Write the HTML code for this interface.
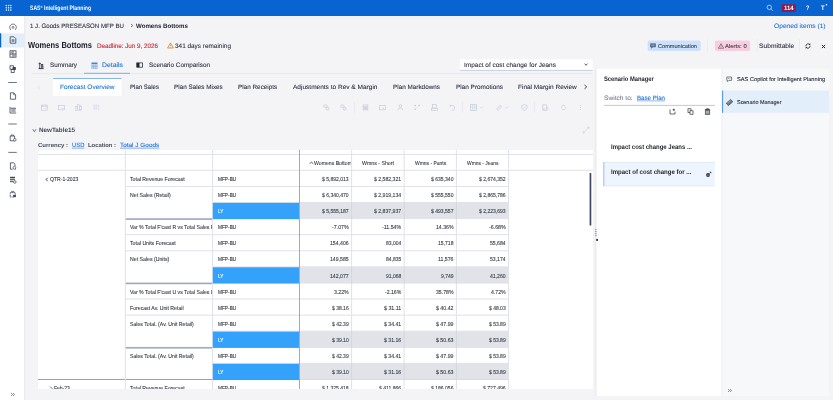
<!DOCTYPE html>
<html><head><meta charset="utf-8"><title>SAS Intelligent Planning</title>
<style>
html,body{margin:0;padding:0;}
body{width:833px;height:400px;overflow:hidden;background:#f4f4f7;font-family:"Liberation Sans",sans-serif;position:relative;}
#app{filter:brightness(1);position:absolute;left:0;top:0;width:833px;height:400px;overflow:hidden;background:#f4f4f7;}
#app div,#app svg,#app span.t{position:absolute;}
span.t{left:0;top:0;white-space:pre;transform-origin:0 0;display:block;}
span.b{will-change:transform;}
span.r{-webkit-text-stroke:0.08px;}
span.s{-webkit-text-stroke:0.1px;}
span.c{will-change:auto;text-rendering:geometricPrecision;}
span.g{text-rendering:geometricPrecision;}
.clip{overflow:hidden;}
</style></head><body><div id="app">
<svg style="left:0;top:0" width="833" height="400" viewBox="0 0 833 400">
<rect x="0.00" y="0.00" width="833.00" height="16.00" fill="#0764d1"/>
<rect x="781.80" y="4.30" width="14.00" height="7.60" fill="#8c1c48" rx="1"/>
<rect x="825.70" y="3.90" width="1.50" height="1.50" fill="#fff" rx="0.7"/>
<rect x="0.00" y="16.00" width="24.00" height="384.00" fill="#fff"/>
<rect x="24.00" y="16.00" width="1.40" height="384.00" fill="#ebecf0"/>
<rect x="0.00" y="33.30" width="24.00" height="14.20" fill="#e3eefb"/>
<rect x="0.00" y="33.30" width="1.20" height="14.20" fill="#0764d1"/>
<rect x="8.30" y="82.20" width="8.50" height="0.80" fill="#4a5060"/>
<rect x="8.30" y="123.60" width="8.50" height="0.80" fill="#4a5060"/>
<rect x="8.30" y="151.90" width="8.50" height="0.80" fill="#4a5060"/>
<rect x="647.70" y="40.50" width="53.00" height="10.40" fill="#cde1fb" rx="1.6"/>
<rect x="714.90" y="40.50" width="35.30" height="10.40" fill="#f6cfdf" rx="1.6"/>
<rect x="707.30" y="39.00" width="0.60" height="13.00" fill="#e6e8ed"/>
<rect x="756.80" y="39.00" width="0.60" height="13.00" fill="#e2e4ea"/>
<rect x="799.40" y="39.00" width="0.60" height="13.00" fill="#e2e4ea"/>
<rect x="31.50" y="73.20" width="561.00" height="0.60" fill="#e1e3e9"/>
<rect x="84.00" y="72.80" width="46.00" height="1.00" fill="#7aaeee"/>
<rect x="460.20" y="59.30" width="132.50" height="11.00" fill="#fff"/>
<rect x="460.20" y="69.90" width="132.50" height="0.80" fill="#bac6d8"/>
<rect x="53.00" y="78.00" width="68.50" height="18.00" fill="#fff"/>
<rect x="53.00" y="78.00" width="68.50" height="0.90" fill="#77aeee"/>
<rect x="354.20" y="101.80" width="0.60" height="11.40" fill="#e0e3ea"/>
<rect x="462.30" y="101.80" width="0.60" height="11.40" fill="#e0e3ea"/>
<rect x="534.20" y="101.80" width="0.60" height="11.40" fill="#e0e3ea"/>
<rect x="38.00" y="150.00" width="554.90" height="239.00" fill="#fff"/>
<rect x="38.00" y="153.90" width="554.90" height="1.00" fill="#dfe1ea"/>
<rect x="38.00" y="169.80" width="554.90" height="1.00" fill="#dfe1ea"/>
<rect x="125.30" y="185.89" width="383.30" height="1.00" fill="#dfe1ea"/>
<rect x="212.60" y="201.98" width="296.00" height="1.00" fill="#dfe1ea"/>
<rect x="125.30" y="218.07" width="383.30" height="1.00" fill="#dfe1ea"/>
<rect x="125.30" y="234.16" width="383.30" height="1.00" fill="#dfe1ea"/>
<rect x="125.30" y="250.25" width="383.30" height="1.00" fill="#dfe1ea"/>
<rect x="212.60" y="266.34" width="296.00" height="1.00" fill="#dfe1ea"/>
<rect x="125.30" y="282.43" width="383.30" height="1.00" fill="#dfe1ea"/>
<rect x="125.30" y="298.52" width="383.30" height="1.00" fill="#dfe1ea"/>
<rect x="125.30" y="314.61" width="383.30" height="1.00" fill="#dfe1ea"/>
<rect x="212.60" y="330.70" width="296.00" height="1.00" fill="#dfe1ea"/>
<rect x="125.30" y="346.79" width="383.30" height="1.00" fill="#dfe1ea"/>
<rect x="212.60" y="362.88" width="296.00" height="1.00" fill="#dfe1ea"/>
<rect x="38.00" y="378.97" width="470.60" height="1.00" fill="#8fa2b8"/>
<rect x="125.30" y="218.37" width="87.30" height="1.50" fill="#98a9bf"/>
<rect x="125.30" y="282.73" width="87.30" height="1.50" fill="#98a9bf"/>
<rect x="125.30" y="347.09" width="87.30" height="1.50" fill="#98a9bf"/>
<rect x="124.80" y="150.00" width="1.00" height="239.00" fill="#dfe1ea"/>
<rect x="212.10" y="150.00" width="1.00" height="239.00" fill="#dfe1ea"/>
<rect x="299.00" y="150.00" width="0.80" height="239.00" fill="#8f94a5"/>
<rect x="351.10" y="150.00" width="1.00" height="239.00" fill="#dfe1ea"/>
<rect x="403.60" y="150.00" width="1.00" height="239.00" fill="#dfe1ea"/>
<rect x="455.90" y="150.00" width="1.00" height="239.00" fill="#dfe1ea"/>
<rect x="508.10" y="150.00" width="1.00" height="239.00" fill="#dfe1ea"/>
<rect x="212.80" y="202.88" width="86.40" height="16.29" fill="#34a1fa"/>
<rect x="299.80" y="202.58" width="208.80" height="16.39" fill="#e1e3e8"/>
<rect x="351.10" y="202.58" width="1.00" height="16.39" fill="#d3d6de"/>
<rect x="403.60" y="202.58" width="1.00" height="16.39" fill="#d3d6de"/>
<rect x="455.90" y="202.58" width="1.00" height="16.39" fill="#d3d6de"/>
<rect x="212.80" y="267.24" width="86.40" height="16.29" fill="#34a1fa"/>
<rect x="299.80" y="266.94" width="208.80" height="16.39" fill="#e1e3e8"/>
<rect x="351.10" y="266.94" width="1.00" height="16.39" fill="#d3d6de"/>
<rect x="403.60" y="266.94" width="1.00" height="16.39" fill="#d3d6de"/>
<rect x="455.90" y="266.94" width="1.00" height="16.39" fill="#d3d6de"/>
<rect x="212.80" y="331.60" width="86.40" height="16.29" fill="#34a1fa"/>
<rect x="299.80" y="331.30" width="208.80" height="16.39" fill="#e1e3e8"/>
<rect x="351.10" y="331.30" width="1.00" height="16.39" fill="#d3d6de"/>
<rect x="403.60" y="331.30" width="1.00" height="16.39" fill="#d3d6de"/>
<rect x="455.90" y="331.30" width="1.00" height="16.39" fill="#d3d6de"/>
<rect x="212.80" y="363.78" width="86.40" height="16.29" fill="#34a1fa"/>
<rect x="299.80" y="363.48" width="208.80" height="16.39" fill="#e1e3e8"/>
<rect x="351.10" y="363.48" width="1.00" height="16.39" fill="#d3d6de"/>
<rect x="403.60" y="363.48" width="1.00" height="16.39" fill="#d3d6de"/>
<rect x="455.90" y="363.48" width="1.00" height="16.39" fill="#d3d6de"/>
<rect x="589.60" y="173.00" width="1.70" height="52.60" fill="#3d4864" rx="0.6"/>
<rect x="594.90" y="68.60" width="1.80" height="327.60" fill="#ebecf1"/>
<rect x="596.60" y="68.60" width="125.20" height="327.40" fill="#fff"/>
<rect x="722.00" y="68.60" width="107.00" height="327.40" fill="#f7f8fa"/>
<rect x="721.70" y="68.60" width="0.60" height="327.40" fill="#e6e8ec"/>
<rect x="595.00" y="229.20" width="1.70" height="0.90" fill="#8d929e"/>
<rect x="595.00" y="231.20" width="1.70" height="0.90" fill="#8d929e"/>
<rect x="595.00" y="233.20" width="1.70" height="0.90" fill="#8d929e"/>
<rect x="595.00" y="235.20" width="1.70" height="0.90" fill="#8d929e"/>
<rect x="596.20" y="238.90" width="1.80" height="2.00" fill="#2f3545"/>
<rect x="604.00" y="104.90" width="111.00" height="0.90" fill="#bfc2c9"/>
<rect x="603.50" y="162.20" width="111.40" height="24.00" fill="#eff5fe"/>
<rect x="603.50" y="162.20" width="111.40" height="0.60" fill="#d6e4f6"/>
<rect x="603.50" y="185.60" width="111.40" height="0.60" fill="#d6e4f6"/>
<rect x="603.40" y="162.20" width="0.90" height="24.00" fill="#8db6ee"/>
<rect x="722.00" y="90.60" width="107.00" height="22.20" fill="#e3eefb"/>
<rect x="722.10" y="90.60" width="1.00" height="22.20" fill="#4f8fe6"/>
<rect x="72.00" y="147.68" width="12.40" height="0.90" fill="#1a6fd6" fill-opacity="0.55"/>
<rect x="120.00" y="147.68" width="39.30" height="0.90" fill="#1a6fd6" fill-opacity="0.55"/>
<rect x="637.00" y="100.42" width="28.00" height="0.90" fill="#1a6fd6" fill-opacity="0.55"/>
</svg>
<svg style="left:0px;top:0px;" width="24" height="16" viewBox="0 0 24 16"><rect x="5.70" y="4.90" width="1.25" height="1.25" fill="#fff"/><rect x="5.70" y="7.15" width="1.25" height="1.25" fill="#fff"/><rect x="5.70" y="9.40" width="1.25" height="1.25" fill="#fff"/><rect x="7.95" y="4.90" width="1.25" height="1.25" fill="#fff"/><rect x="7.95" y="7.15" width="1.25" height="1.25" fill="#fff"/><rect x="7.95" y="9.40" width="1.25" height="1.25" fill="#fff"/><rect x="10.20" y="4.90" width="1.25" height="1.25" fill="#fff"/><rect x="10.20" y="7.15" width="1.25" height="1.25" fill="#fff"/><rect x="10.20" y="9.40" width="1.25" height="1.25" fill="#fff"/></svg>
<span class="t c" style="font-size:6.4px;line-height:8px;color:#fff;transform:translate(30.00px,5.00px) scaleX(0.7977);font-weight:700;">SAS<span style="font-size:3.6px;vertical-align:2.4px;line-height:0">®</span> Intelligent Planning</span>
<svg style="left:765px;top:3px;" width="10" height="10" viewBox="0 0 10 10"><circle cx="4.3" cy="4.3" r="2.2" fill="none" stroke="#e8f0fb" stroke-width="0.7"/><path d="M6 6 L7.6 7.6" stroke="#e8f0fb" stroke-width="0.7"/></svg>
<span class="t c" style="font-size:6.2px;line-height:8px;color:#fff;transform:translate(784.00px,5.00px) scaleX(0.9597);font-weight:700;">114</span>
<span class="t c" style="font-size:6.5px;line-height:9px;color:#fff;transform:translate(806.00px,4.00px) scaleX(0.8563);font-weight:700;">?</span>
<span class="t c" style="font-size:6.6px;line-height:9px;color:#fff;transform:translate(821.00px,4.00px) scaleX(0.8929);font-weight:700;">T</span>
<svg style="left:8.5px;top:22.6px;" width="8" height="8" viewBox="0 0 8 8"><circle cx="4" cy="4.4" r="1.0" fill="none" stroke="#3b4252" stroke-width="0.65"/><path d="M2 7 A3.3 3.3 0 1 1 6 7" fill="none" stroke="#3b4252" stroke-width="0.7"/></svg>
<svg style="left:8.5px;top:36.4px;" width="8" height="8" viewBox="0 0 8 8"><path d="M1.2 0.8 H5 L6.8 2.6 V7.2 H1.2 Z" fill="none" stroke="#3b4252" stroke-width="0.8"/><rect x="2.6" y="3.2" width="2.8" height="2.6" fill="#3b4252" opacity="0.6"/></svg>
<svg style="left:8.5px;top:50.4px;" width="8" height="8" viewBox="0 0 8 8"><rect x="1" y="0.8" width="6" height="6.4" fill="none" stroke="#3b4252" stroke-width="0.8"/><path d="M4 0.8 V7.2 M1 4 H7" stroke="#3b4252" stroke-width="0.8"/><rect x="1.8" y="1.6" width="1.6" height="1.6" fill="#3b4252" opacity=".5"/><rect x="4.8" y="4.8" width="1.6" height="1.6" fill="#3b4252" opacity=".5"/></svg>
<svg style="left:8.5px;top:64.5px;" width="8" height="8" viewBox="0 0 8 8"><rect x="1" y="0.8" width="3.4" height="3.4" fill="none" stroke="#3b4252" stroke-width="0.8"/><rect x="3.6" y="2" width="3.2" height="3" fill="#3b4252"/><rect x="2.2" y="4.6" width="3" height="2.8" fill="none" stroke="#3b4252" stroke-width="0.8"/></svg>
<svg style="left:8.5px;top:92.2px;" width="8" height="8" viewBox="0 0 8 8"><path d="M1.4 0.8 H4.8 L6.6 2.6 V7.2 H1.4 Z" fill="none" stroke="#3b4252" stroke-width="0.8"/><path d="M4.6 1 V2.8 H6.4" fill="none" stroke="#3b4252" stroke-width="0.6"/></svg>
<svg style="left:8.5px;top:106.2px;" width="8" height="8" viewBox="0 0 8 8"><path d="M1 0.8 V7 H7.2" fill="none" stroke="#3b4252" stroke-width="0.8"/><path d="M2.2 2.2 H6.6 V6 H2.2 Z" fill="#3b4252" opacity=".45"/><path d="M1.4 2.2 H7" stroke="#3b4252" stroke-width="0.7"/></svg>
<svg style="left:8.5px;top:134px;" width="8" height="8" viewBox="0 0 8 8"><path d="M1.2 2 H5.6 V6.8 H1.2 Z" fill="none" stroke="#3b4252" stroke-width="0.8"/><path d="M2.2 2 V1 H4.4 V2" fill="none" stroke="#3b4252" stroke-width="0.7"/><circle cx="5.8" cy="5.8" r="1.3" fill="#fff" stroke="#3b4252" stroke-width="0.7"/></svg>
<svg style="left:8.5px;top:161.5px;" width="8" height="8" viewBox="0 0 8 8"><path d="M1.4 0.8 H4.6 L6 2.2 V4 M3.6 7.2 H1.4 V0.8" fill="none" stroke="#3b4252" stroke-width="0.8"/><circle cx="5.4" cy="5.8" r="1.4" fill="none" stroke="#3b4252" stroke-width="0.7"/><path d="M6.2 6.8 L7 7.6" stroke="#3b4252" stroke-width="0.7"/></svg>
<svg style="left:8.5px;top:175.5px;" width="8" height="8" viewBox="0 0 8 8"><rect x="1" y="0.8" width="5" height="1.4" fill="#3b4252"/><rect x="1" y="2.8" width="5" height="1.4" fill="#3b4252" opacity=".8"/><rect x="1" y="4.8" width="3" height="1.4" fill="#3b4252" opacity=".8"/><circle cx="5.8" cy="6" r="1.3" fill="#fff" stroke="#3b4252" stroke-width="0.7"/></svg>
<svg style="left:8.5px;top:189.5px;" width="8" height="8" viewBox="0 0 8 8"><path d="M1.2 2.6 H6.2 V7 H1.2 Z" fill="none" stroke="#3b4252" stroke-width="0.8" stroke-dasharray="1.2 0.5"/><path d="M2.6 2.6 V1.4 H4.8 V2.6" fill="none" stroke="#3b4252" stroke-width="0.7"/><rect x="4.2" y="4.8" width="2.6" height="2.2" fill="#3b4252"/></svg>
<svg style="left:9.5px;top:392px;" width="6" height="5" viewBox="0 0 6 5"><path d="M1 1 L2.6 2.5 L1 4 M3 1 L4.6 2.5 L3 4" fill="none" stroke="#3b4252" stroke-width="0.6"/></svg>
<span class="t r c" style="font-size:6.3px;line-height:8px;color:#2a2f3a;transform:translate(30.00px,23.00px) scaleX(0.9704);">1 J. Goods PRESEASON MFP BU</span>
<svg style="left:129.5px;top:23.3px;" width="4" height="5" viewBox="0 0 4 5"><path d="M1 1 L2.8 2.5 L1 4" fill="none" stroke="#2a2f3a" stroke-width="0.6"/></svg>
<span class="t c" style="font-size:6.3px;line-height:8px;color:#1a1e28;transform:translate(136.00px,23.00px) scaleX(0.9731);font-weight:700;">Womens Bottoms</span>
<span class="t r c" style="font-size:6.3px;line-height:8px;color:#1a6fd6;transform:translate(774.00px,23.00px) scaleX(1.0601);">Opened items (1)</span>
<span class="t c" style="font-size:8.8px;line-height:11px;color:#1a1e28;transform:translate(28.00px,40.00px) scaleX(0.8574);font-weight:700;">Womens Bottoms</span>
<span class="t r c" style="font-size:6.5px;line-height:9px;color:#c4202b;transform:translate(97.00px,42.00px) scaleX(0.9645);">Deadline: Jun 9, 2026</span>
<svg style="left:167px;top:42px;" width="7" height="7" viewBox="0 0 7 7"><path d="M3.5 0.9 L6.4 6 H0.6 Z" fill="none" stroke="#c8721a" stroke-width="0.7"/><path d="M3.5 2.6 V4.4 M3.5 5 V5.5" stroke="#c8721a" stroke-width="0.6"/></svg>
<span class="t r c" style="font-size:6.5px;line-height:9px;color:#2a2f3a;transform:translate(175.00px,42.00px) scaleX(0.9871);">341 days remaining</span>
<svg style="left:650.4px;top:42.8px;" width="6" height="6" viewBox="0 0 6 6"><path d="M0.5 0.7 H5.5 V3.9 H2.8 L1.5 5.3 V3.9 H0.5 Z" fill="#5a6f90" stroke="#3c4f6e" stroke-width="0.5"/><path d="M1.3 1.8 H4.7 M1.3 2.8 H4.7" stroke="#cde1fb" stroke-width="0.35"/></svg>
<span class="t r c s" style="font-size:5.6px;line-height:7px;color:#34435a;transform:translate(658.00px,44.00px) scaleX(0.9998);">Communication</span>
<svg style="left:718.1px;top:42.8px;" width="6" height="6" viewBox="0 0 6 6"><path d="M3 0.7 L5.6 5.3 H0.4 Z" fill="none" stroke="#5d4052" stroke-width="0.6"/><path d="M3 2.3 V3.7 M3 4.2 V4.7" stroke="#5d4052" stroke-width="0.5"/></svg>
<span class="t r c s" style="font-size:5.6px;line-height:7px;color:#4d3a4a;transform:translate(725.00px,44.00px) scaleX(1.0564);">Alerts: 0</span>
<span class="t r c" style="font-size:6.4px;line-height:8px;color:#2a2f3a;transform:translate(759.00px,43.00px) scaleX(1.0444);">Submittable</span>
<svg style="left:804px;top:42px;" width="8" height="8" viewBox="0 0 8 8"><path d="M1.9 4.3 A2.2 2.2 0 0 1 5.6 2.4 M6.1 3.7 A2.2 2.2 0 0 1 2.4 5.6" fill="none" stroke="#1f2430" stroke-width="0.8"/><path d="M6.3 1.2 V3 H4.5 Z M1.7 6.8 V5 H3.5 Z" fill="#1f2430"/></svg>
<svg style="left:819.5px;top:42.5px;" width="7" height="7" viewBox="0 0 7 7"><path d="M1.9 1.9 L5.1 5.1 M5.1 1.9 L1.9 5.1" stroke="#1f2430" stroke-width="1.0"/></svg>
<svg style="left:38px;top:61.6px;" width="7" height="8" viewBox="0 0 7 8"><path d="M1.7 0.8 V6.6 M0.5 2.2 L1.7 0.8 L2.9 2.2" fill="none" stroke="#1f2430" stroke-width="0.75"/><rect x="2.9" y="2.2" width="2.3" height="1.5" fill="#1f2430"/><rect x="2.9" y="4.3" width="2.6" height="1.3" fill="#1f2430"/><rect x="0.6" y="6.2" width="5" height="0.9" fill="#1f2430"/></svg>
<span class="t r c" style="font-size:6.4px;line-height:8px;color:#2a2f3a;transform:translate(50.00px,62.00px) scaleX(0.9860);">Summary</span>
<svg style="left:90.8px;top:61.5px;" width="7" height="8" viewBox="0 0 7 8"><rect x="0.5" y="0.5" width="6" height="1.5" fill="#3f87e4"/><path d="M0.5 3.1 H6.5 M0.5 4.6 H6.5 M0.5 6.1 H6.5" stroke="#4f8fe6" stroke-width="0.6"/><path d="M0.8 2 V7 M2.5 2 V7 M4.5 2 V7 M6.2 2 V7" stroke="#7fb0ef" stroke-width="0.5"/></svg>
<span class="t r c" style="font-size:6.4px;line-height:8px;color:#1a6fd6;transform:translate(102.00px,62.00px) scaleX(1.0735);">Details</span>
<svg style="left:136.2px;top:62px;" width="7" height="7" viewBox="0 0 7 7"><rect x="0.8" y="0.9" width="5.6" height="4.3" fill="none" stroke="#1f2430" stroke-width="0.75"/><rect x="0.8" y="0.9" width="2.7" height="4.3" fill="#1f2430"/></svg>
<span class="t r c" style="font-size:6.4px;line-height:8px;color:#2a2f3a;transform:translate(149.00px,62.00px) scaleX(0.9928);">Scenario Comparison</span>
<span class="t r c" style="font-size:6.3px;line-height:8px;color:#2a2f3a;transform:translate(464.00px,62.00px) scaleX(1.0302);">Impact of cost change for Jeans</span>
<svg style="left:583.4px;top:62px;" width="6" height="5" viewBox="0 0 6 5"><path d="M1.6 1.6 L3 3.3 L4.4 1.6" fill="none" stroke="#2a2f3a" stroke-width="0.75"/></svg>
<svg style="left:36.5px;top:84.5px;" width="4" height="5" viewBox="0 0 4 5"><path d="M2.8 0.8 L1.2 2.5 L2.8 4.2" fill="none" stroke="#cfd3da" stroke-width="0.6"/></svg>
<span class="t r c" style="font-size:6.3px;line-height:8px;color:#1a6fd6;transform:translate(60.00px,84.00px) scaleX(1.0397);">Forecast Overview</span>
<span class="t r c" style="font-size:6.3px;line-height:8px;color:#2a2f3a;transform:translate(130.00px,84.00px) scaleX(0.9628);">Plan Sales</span>
<span class="t r c" style="font-size:6.3px;line-height:8px;color:#2a2f3a;transform:translate(174.00px,84.00px) scaleX(1.0099);">Plan Sales Mixes</span>
<span class="t r c" style="font-size:6.3px;line-height:8px;color:#2a2f3a;transform:translate(238.00px,84.00px) scaleX(1.0110);">Plan Receipts</span>
<span class="t r c" style="font-size:6.3px;line-height:8px;color:#2a2f3a;transform:translate(293.00px,84.00px) scaleX(1.0357);">Adjustments to Rev &amp; Margin</span>
<span class="t r c" style="font-size:6.3px;line-height:8px;color:#2a2f3a;transform:translate(393.00px,84.00px) scaleX(1.0092);">Plan Markdowns</span>
<span class="t r c" style="font-size:6.3px;line-height:8px;color:#2a2f3a;transform:translate(456.00px,84.00px) scaleX(1.0189);">Plan Promotions</span>
<span class="t r c" style="font-size:6.3px;line-height:8px;color:#2a2f3a;transform:translate(518.00px,84.00px) scaleX(1.0303);">Final Margin Review</span>
<svg style="left:583.2px;top:84.2px;" width="6" height="6" viewBox="0 0 6 6"><path d="M1.5 1 L3.7 2.9 L1.5 4.8" fill="none" stroke="#2a2f3a" stroke-width="0.85"/></svg>
<svg style="left:40.6px;top:104.2px;" width="7" height="7" viewBox="0 0 7 7"><rect x="0.6" y="1.2" width="5.6" height="5" fill="none" stroke="#c6ccd8" stroke-width="0.7"/><path d="M0.6 2.6 H6.2 M2 0.4 V1.6 M4.8 0.4 V1.6 M3.6 4.6 H5.2" stroke="#c6ccd8" stroke-width="0.6"/></svg>
<svg style="left:58px;top:104.2px;" width="7" height="7" viewBox="0 0 7 7"><rect x="0.6" y="1.4" width="5.8" height="4.4" fill="none" stroke="#c6ccd8" stroke-width="0.7"/><path d="M3.6 3.4 L5.4 4.4 L4.4 5.4 Z" fill="#c6ccd8"/></svg>
<svg style="left:75.3px;top:104.2px;" width="7" height="7" viewBox="0 0 7 7"><rect x="0.6" y="2.6" width="1.6" height="3.6" fill="none" stroke="#c6ccd8" stroke-width="0.6"/><rect x="2.6" y="0.8" width="1.8" height="5.4" fill="none" stroke="#c6ccd8" stroke-width="0.6"/><rect x="4.8" y="1.8" width="1.6" height="4.4" fill="none" stroke="#c6ccd8" stroke-width="0.6"/></svg>
<svg style="left:92.8px;top:104.2px;" width="7" height="7" viewBox="0 0 7 7"><path d="M0.4 1.2 H6.2 M0.4 3 H6.2 M0.4 4.8 H4.6" stroke="#c6ccd8" stroke-width="0.7" stroke-dasharray="1.6 0.5"/><path d="M5.4 4.6 L6.4 5.8 L5.4 6.6" fill="#c6ccd8"/></svg>
<svg style="left:323px;top:104.2px;" width="7" height="7" viewBox="0 0 7 7"><rect x="0.6" y="1" width="3.6" height="2.4" rx="1" fill="none" stroke="#c6ccd8" stroke-width="0.7"/><circle cx="4.6" cy="4.6" r="1.5" fill="#eef0f4" stroke="#c6ccd8" stroke-width="0.7"/></svg>
<svg style="left:340.3px;top:104.2px;" width="7" height="7" viewBox="0 0 7 7"><rect x="0.6" y="1" width="3.6" height="2.4" rx="1" fill="none" stroke="#c6ccd8" stroke-width="0.7"/><circle cx="4.6" cy="4.6" r="1.5" fill="#eef0f4" stroke="#c6ccd8" stroke-width="0.7"/></svg>
<svg style="left:361.6px;top:104.2px;" width="7" height="7" viewBox="0 0 7 7"><rect x="0.6" y="0.4" width="5.6" height="6" fill="#c6ccd8" opacity=".75"/><rect x="1.6" y="0.4" width="3.4" height="1.8" fill="#e6e9ef"/></svg>
<svg style="left:379px;top:104.2px;" width="7" height="7" viewBox="0 0 7 7"><rect x="0.6" y="1.4" width="5.8" height="4.4" fill="none" stroke="#c6ccd8" stroke-width="0.7"/><path d="M3.6 3.4 L5.4 4.4 L4.4 5.4 Z" fill="#c6ccd8"/></svg>
<svg style="left:396.6px;top:104.2px;" width="7" height="7" viewBox="0 0 7 7"><circle cx="3.4" cy="2" r="1.4" fill="none" stroke="#c6ccd8" stroke-width="0.7"/><path d="M1 6.4 Q1 4 3.4 4 Q5.8 4 5.8 6.4" fill="none" stroke="#c6ccd8" stroke-width="0.7"/></svg>
<svg style="left:413.6px;top:104.2px;" width="7" height="7" viewBox="0 0 7 7"><rect x="0.4" y="0.8" width="1.6" height="1.3" fill="#c6ccd8"/><rect x="4.4" y="0.8" width="1.6" height="1.3" fill="#c6ccd8"/><rect x="0.4" y="4.6" width="1.6" height="1.3" fill="#c6ccd8"/><path d="M2.4 4.4 L4.2 2.6" stroke="#c6ccd8" stroke-width="0.4"/></svg>
<svg style="left:431.2px;top:104.2px;" width="7" height="7" viewBox="0 0 7 7"><rect x="1.6" y="0.6" width="3.6" height="3.4" fill="none" stroke="#c6ccd8" stroke-width="0.7"/><rect x="0.6" y="4.6" width="5.8" height="1.8" fill="none" stroke="#c6ccd8" stroke-width="0.7"/></svg>
<svg style="left:449px;top:104.2px;" width="7" height="7" viewBox="0 0 7 7"><path d="M1.4 2 A2.5 2.5 0 1 1 2.6 6.2" fill="none" stroke="#c6ccd8" stroke-width="0.7"/><path d="M0.4 1 L2.4 1.4 L1 3 Z" fill="#c6ccd8"/></svg>
<svg style="left:470px;top:104.2px;" width="14" height="7" viewBox="0 0 14 7"><rect x="0.6" y="0.6" width="6" height="5.8" fill="none" stroke="#c6ccd8" stroke-width="0.7"/><path d="M2.6 0.6 V6.4 M4.6 0.6 V6.4 M0.6 3 H6.6" stroke="#c6ccd8" stroke-width="0.5"/><path d="M9.8 2.6 L11.5 4.2 L13.2 2.6" fill="none" stroke="#c6ccd8" stroke-width="0.6"/></svg>
<svg style="left:496px;top:104.2px;" width="13" height="7" viewBox="0 0 13 7"><path d="M0.6 5 L4.2 1.2 L5.8 2.6 L2.2 6.4 Z" fill="none" stroke="#c6ccd8" stroke-width="0.7"/><path d="M1.8 4.6 L4.6 1.8" stroke="#c6ccd8" stroke-width="0.4"/><path d="M9 2.6 L10.7 4.2 L12.4 2.6" fill="none" stroke="#c6ccd8" stroke-width="0.6"/></svg>
<svg style="left:520.5px;top:104.2px;" width="7" height="7" viewBox="0 0 7 7"><path d="M3.4 0.6 L6 1.6 V3.6 Q6 5.4 3.4 6.6 Q0.8 5.4 0.8 3.6 V1.6 Z" fill="none" stroke="#c6ccd8" stroke-width="0.7"/><path d="M2.2 3.4 L3.2 4.4 L4.8 2.6" fill="none" stroke="#c6ccd8" stroke-width="0.6"/></svg>
<svg style="left:542.3px;top:104.2px;" width="7" height="7" viewBox="0 0 7 7"><path d="M0.8 0.8 H4.6 V6.4 H0.8 Z" fill="none" stroke="#c6ccd8" stroke-width="0.7"/><circle cx="2.2" cy="5" r="0.9" fill="none" stroke="#c6ccd8" stroke-width="0.5"/><path d="M5.6 2.6 V6.4" stroke="#c6ccd8" stroke-width="0.6"/></svg>
<svg style="left:559.6px;top:104.2px;" width="7" height="7" viewBox="0 0 7 7"><path d="M1.2 3.8 A2.3 2.3 0 0 1 5.2 2.2 M5.8 3.2 A2.3 2.3 0 0 1 1.8 4.9" fill="none" stroke="#c6ccd8" stroke-width="0.7"/></svg>
<svg style="left:578.8px;top:104.2px;" width="3" height="7" viewBox="0 0 3 7"><circle cx="1.5" cy="1.2" r="0.5" fill="#c6ccd8"/><circle cx="1.5" cy="3.3" r="0.5" fill="#c6ccd8"/><circle cx="1.5" cy="5.4" r="0.5" fill="#c6ccd8"/></svg>
<svg style="left:32px;top:127.8px;" width="5" height="5" viewBox="0 0 5 5"><path d="M0.7 1.2 L2.4 3.6 L4.1 1.2" fill="none" stroke="#3a3f4a" stroke-width="0.7"/></svg>
<span class="t c" style="font-size:6.3px;line-height:8px;color:#434854;transform:translate(39.00px,127.00px) scaleX(1.0014);font-weight:700;">NewTable15</span>
<span class="t c" style="font-size:5.8px;line-height:8px;color:#474c58;transform:translate(38.00px,142.00px) scaleX(1.0342);font-weight:700;">Currency :</span>
<span class="t r c" style="font-size:6.2px;line-height:8px;color:#1a6fd6;transform:translate(72.00px,142.00px) scaleX(0.9472);">USD</span>
<span class="t c" style="font-size:5.8px;line-height:8px;color:#474c58;transform:translate(88.00px,142.00px) scaleX(1.0105);font-weight:700;">Location :</span>
<span class="t r c" style="font-size:6.2px;line-height:8px;color:#1a6fd6;transform:translate(120.00px,142.00px) scaleX(1.0367);">Total J Goods</span>
<svg style="left:582px;top:126px;" width="8" height="8" viewBox="0 0 8 8"><path d="M1.4 6.8 L6.8 1.4 M5 1.2 H7 V3.2 M1.2 5 V7 H3.2" fill="none" stroke="#c6ccd8" stroke-width="0.6"/></svg>
<div class="clip" style="left:300.00px;top:155.00px;width:51.30px;height:15.00px;">
<svg style="left:8.600000000000023px;top:5.599999999999994px;" width="5" height="4" viewBox="0 0 5 4"><path d="M0.6 3.2 L2.4 0.8 L4.2 3.2" fill="none" stroke="#2a2f3a" stroke-width="0.6"/></svg>
<span class="t r c s" style="font-size:5.7px;line-height:8px;color:#353a46;transform:translate(14.00px,5.00px) scaleX(0.9047);">Womens Bottoms</span>
</div>
<span class="t r c s" style="font-size:5.7px;line-height:8px;color:#353a46;transform:translate(362.00px,160.00px) scaleX(0.9185);">Wmns - Short</span>
<span class="t r c s" style="font-size:5.7px;line-height:8px;color:#353a46;transform:translate(415.00px,160.00px) scaleX(0.8746);">Wmns - Pants</span>
<span class="t r c s" style="font-size:5.7px;line-height:8px;color:#353a46;transform:translate(467.00px,160.00px) scaleX(0.8648);">Wmns - Jeans</span>
<svg style="left:45px;top:176.6px;" width="4" height="5" viewBox="0 0 4 5"><path d="M2.7 0.8 L1.1 2.5 L2.7 4.2" fill="none" stroke="#2a2f3a" stroke-width="0.9"/></svg>
<span class="t r c s" style="font-size:5.7px;line-height:8px;color:#353a46;transform:translate(50.00px,176.00px) scaleX(0.8968);">QTR-1-2023</span>
<div class="clip" style="left:126.00px;top:171.00px;width:86.30px;height:15.00px;">
<span class="t r c s" style="font-size:5.7px;line-height:8px;color:#353a46;transform:translate(4.00px,5.00px) scaleX(0.9100);">Total Revenue Forecast</span>
</div>
<span class="t r c s" style="font-size:5.7px;line-height:8px;color:#353a46;transform:translate(218.00px,176.00px) scaleX(0.8371);">MFP-BU</span>
<span class="t r c s" style="font-size:5.7px;line-height:8px;color:#353a46;transform:translate(322.00px,176.00px) scaleX(0.8867);">$ 5,892,013</span>
<span class="t r c s" style="font-size:5.7px;line-height:8px;color:#353a46;transform:translate(374.00px,176.00px) scaleX(0.9033);">$ 2,582,321</span>
<span class="t r c s" style="font-size:5.7px;line-height:8px;color:#353a46;transform:translate(431.00px,176.00px) scaleX(0.8873);">$ 635,340</span>
<span class="t r c s" style="font-size:5.7px;line-height:8px;color:#353a46;transform:translate(479.00px,176.00px) scaleX(0.8867);">$ 2,674,352</span>
<div class="clip" style="left:126.00px;top:187.00px;width:86.30px;height:15.00px;">
<span class="t r c s" style="font-size:5.7px;line-height:8px;color:#353a46;transform:translate(4.00px,5.00px) scaleX(0.9117);">Net Sales (Retail)</span>
</div>
<span class="t r c s" style="font-size:5.7px;line-height:8px;color:#353a46;transform:translate(218.00px,192.00px) scaleX(0.8371);">MFP-BU</span>
<span class="t r c s" style="font-size:5.7px;line-height:8px;color:#353a46;transform:translate(322.00px,192.00px) scaleX(0.8867);">$ 6,340,470</span>
<span class="t r c s" style="font-size:5.7px;line-height:8px;color:#353a46;transform:translate(374.00px,192.00px) scaleX(0.9033);">$ 2,919,134</span>
<span class="t r c s" style="font-size:5.7px;line-height:8px;color:#353a46;transform:translate(431.00px,192.00px) scaleX(0.8873);">$ 555,550</span>
<span class="t r c s" style="font-size:5.7px;line-height:8px;color:#353a46;transform:translate(479.00px,192.00px) scaleX(0.8867);">$ 2,865,786</span>
<span class="t r c s" style="font-size:5.7px;line-height:8px;color:#fff;transform:translate(218.00px,208.00px) scaleX(0.8142);">LY</span>
<span class="t r c s" style="font-size:5.7px;line-height:8px;color:#353a46;transform:translate(322.00px,208.00px) scaleX(0.8867);">$ 5,555,187</span>
<span class="t r c s" style="font-size:5.7px;line-height:8px;color:#353a46;transform:translate(374.00px,208.00px) scaleX(0.9033);">$ 2,837,937</span>
<span class="t r c s" style="font-size:5.7px;line-height:8px;color:#353a46;transform:translate(431.00px,208.00px) scaleX(0.8873);">$ 493,557</span>
<span class="t r c s" style="font-size:5.7px;line-height:8px;color:#353a46;transform:translate(479.00px,208.00px) scaleX(0.8867);">$ 2,223,693</span>
<div class="clip" style="left:126.00px;top:219.00px;width:86.30px;height:15.00px;">
<span class="t r c s" style="font-size:5.7px;line-height:8px;color:#353a46;transform:translate(4.00px,5.00px) scaleX(0.9082);">Var % Total F'cast R vs Total Sales R</span>
</div>
<span class="t r c s" style="font-size:5.7px;line-height:8px;color:#353a46;transform:translate(218.00px,224.00px) scaleX(0.8371);">MFP-BU</span>
<span class="t r c s" style="font-size:5.7px;line-height:8px;color:#353a46;transform:translate(332.00px,224.00px) scaleX(0.9247);">-7.07%</span>
<span class="t r c s" style="font-size:5.7px;line-height:8px;color:#353a46;transform:translate(382.00px,224.00px) scaleX(0.9227);">-11.54%</span>
<span class="t r c s" style="font-size:5.7px;line-height:8px;color:#353a46;transform:translate(436.00px,224.00px) scaleX(0.9052);">14.36%</span>
<span class="t r c s" style="font-size:5.7px;line-height:8px;color:#353a46;transform:translate(489.00px,224.00px) scaleX(0.9247);">-6.68%</span>
<div class="clip" style="left:126.00px;top:235.00px;width:86.30px;height:15.00px;">
<span class="t r c s" style="font-size:5.7px;line-height:8px;color:#353a46;transform:translate(4.00px,5.00px) scaleX(0.9110);">Total Units Forecast</span>
</div>
<span class="t r c s" style="font-size:5.7px;line-height:8px;color:#353a46;transform:translate(218.00px,240.00px) scaleX(0.8371);">MFP-BU</span>
<span class="t r c s" style="font-size:5.7px;line-height:8px;color:#353a46;transform:translate(330.00px,240.00px) scaleX(0.9076);">154,406</span>
<span class="t r c s" style="font-size:5.7px;line-height:8px;color:#353a46;transform:translate(386.00px,240.00px) scaleX(0.8718);">83,004</span>
<span class="t r c s" style="font-size:5.7px;line-height:8px;color:#353a46;transform:translate(438.00px,240.00px) scaleX(0.8890);">15,718</span>
<span class="t r c s" style="font-size:5.7px;line-height:8px;color:#353a46;transform:translate(490.00px,240.00px) scaleX(0.9005);">55,684</span>
<div class="clip" style="left:126.00px;top:251.00px;width:86.30px;height:15.00px;">
<span class="t r c s" style="font-size:5.7px;line-height:8px;color:#353a46;transform:translate(4.00px,5.00px) scaleX(0.9120);">Net Sales (Units)</span>
</div>
<span class="t r c s" style="font-size:5.7px;line-height:8px;color:#353a46;transform:translate(218.00px,256.00px) scaleX(0.8371);">MFP-BU</span>
<span class="t r c s" style="font-size:5.7px;line-height:8px;color:#353a46;transform:translate(330.00px,256.00px) scaleX(0.9076);">149,585</span>
<span class="t r c s" style="font-size:5.7px;line-height:8px;color:#353a46;transform:translate(386.00px,256.00px) scaleX(0.8718);">84,835</span>
<span class="t r c s" style="font-size:5.7px;line-height:8px;color:#353a46;transform:translate(438.00px,256.00px) scaleX(0.9112);">11,576</span>
<span class="t r c s" style="font-size:5.7px;line-height:8px;color:#353a46;transform:translate(490.00px,256.00px) scaleX(0.9005);">53,174</span>
<span class="t r c s" style="font-size:5.7px;line-height:8px;color:#fff;transform:translate(218.00px,273.00px) scaleX(0.8142);">LY</span>
<span class="t r c s" style="font-size:5.7px;line-height:8px;color:#353a46;transform:translate(330.00px,273.00px) scaleX(0.9076);">142,077</span>
<span class="t r c s" style="font-size:5.7px;line-height:8px;color:#353a46;transform:translate(386.00px,273.00px) scaleX(0.8718);">91,068</span>
<span class="t r c s" style="font-size:5.7px;line-height:8px;color:#353a46;transform:translate(441.00px,273.00px) scaleX(0.8763);">9,749</span>
<span class="t r c s" style="font-size:5.7px;line-height:8px;color:#353a46;transform:translate(490.00px,273.00px) scaleX(0.9005);">41,260</span>
<div class="clip" style="left:126.00px;top:284.00px;width:86.30px;height:15.00px;">
<span class="t r c s" style="font-size:5.7px;line-height:8px;color:#353a46;transform:translate(4.00px,5.00px) scaleX(0.9082);">Var % Total F'cast U vs Total Sales U</span>
</div>
<span class="t r c s" style="font-size:5.7px;line-height:8px;color:#353a46;transform:translate(218.00px,289.00px) scaleX(0.8371);">MFP-BU</span>
<span class="t r c s" style="font-size:5.7px;line-height:8px;color:#353a46;transform:translate(334.00px,289.00px) scaleX(0.9095);">3.22%</span>
<span class="t r c s" style="font-size:5.7px;line-height:8px;color:#353a46;transform:translate(385.00px,289.00px) scaleX(0.8970);">-2.16%</span>
<span class="t r c s" style="font-size:5.7px;line-height:8px;color:#353a46;transform:translate(436.00px,289.00px) scaleX(0.9052);">35.78%</span>
<span class="t r c s" style="font-size:5.7px;line-height:8px;color:#353a46;transform:translate(491.00px,289.00px) scaleX(0.9095);">4.72%</span>
<div class="clip" style="left:126.00px;top:300.00px;width:86.30px;height:15.00px;">
<span class="t r c s" style="font-size:5.7px;line-height:8px;color:#353a46;transform:translate(4.00px,5.00px) scaleX(0.9101);">Forecast Av. Unit Retail</span>
</div>
<span class="t r c s" style="font-size:5.7px;line-height:8px;color:#353a46;transform:translate(218.00px,305.00px) scaleX(0.8371);">MFP-BU</span>
<span class="t r c s" style="font-size:5.7px;line-height:8px;color:#353a46;transform:translate(332.00px,305.00px) scaleX(0.8781);">$ 38.16</span>
<span class="t r c s" style="font-size:5.7px;line-height:8px;color:#353a46;transform:translate(384.00px,305.00px) scaleX(0.9250);">$ 31.11</span>
<span class="t r c s" style="font-size:5.7px;line-height:8px;color:#353a46;transform:translate(436.00px,305.00px) scaleX(0.9202);">$ 40.42</span>
<span class="t r c s" style="font-size:5.7px;line-height:8px;color:#353a46;transform:translate(489.00px,305.00px) scaleX(0.8781);">$ 48.03</span>
<div class="clip" style="left:126.00px;top:316.00px;width:86.30px;height:15.00px;">
<span class="t r c s" style="font-size:5.7px;line-height:8px;color:#353a46;transform:translate(4.00px,5.00px) scaleX(0.9093);">Sales Total. (Av. Unit Retail)</span>
</div>
<span class="t r c s" style="font-size:5.7px;line-height:8px;color:#353a46;transform:translate(218.00px,321.00px) scaleX(0.8371);">MFP-BU</span>
<span class="t r c s" style="font-size:5.7px;line-height:8px;color:#353a46;transform:translate(332.00px,321.00px) scaleX(0.8781);">$ 42.39</span>
<span class="t r c s" style="font-size:5.7px;line-height:8px;color:#353a46;transform:translate(384.00px,321.00px) scaleX(0.9044);">$ 34.41</span>
<span class="t r c s" style="font-size:5.7px;line-height:8px;color:#353a46;transform:translate(436.00px,321.00px) scaleX(0.9202);">$ 47.99</span>
<span class="t r c s" style="font-size:5.7px;line-height:8px;color:#353a46;transform:translate(489.00px,321.00px) scaleX(0.8781);">$ 53.89</span>
<span class="t r c s" style="font-size:5.7px;line-height:8px;color:#fff;transform:translate(218.00px,337.00px) scaleX(0.8142);">LY</span>
<span class="t r c s" style="font-size:5.7px;line-height:8px;color:#353a46;transform:translate(332.00px,337.00px) scaleX(0.8781);">$ 39.10</span>
<span class="t r c s" style="font-size:5.7px;line-height:8px;color:#353a46;transform:translate(384.00px,337.00px) scaleX(0.9044);">$ 31.16</span>
<span class="t r c s" style="font-size:5.7px;line-height:8px;color:#353a46;transform:translate(436.00px,337.00px) scaleX(0.9202);">$ 50.63</span>
<span class="t r c s" style="font-size:5.7px;line-height:8px;color:#353a46;transform:translate(489.00px,337.00px) scaleX(0.8781);">$ 53.89</span>
<div class="clip" style="left:126.00px;top:348.00px;width:86.30px;height:15.00px;">
<span class="t r c s" style="font-size:5.7px;line-height:8px;color:#353a46;transform:translate(4.00px,5.00px) scaleX(0.9093);">Sales Total. (Av. Unit Retail)</span>
</div>
<span class="t r c s" style="font-size:5.7px;line-height:8px;color:#353a46;transform:translate(218.00px,353.00px) scaleX(0.8371);">MFP-BU</span>
<span class="t r c s" style="font-size:5.7px;line-height:8px;color:#353a46;transform:translate(332.00px,353.00px) scaleX(0.8781);">$ 42.39</span>
<span class="t r c s" style="font-size:5.7px;line-height:8px;color:#353a46;transform:translate(384.00px,353.00px) scaleX(0.9044);">$ 34.41</span>
<span class="t r c s" style="font-size:5.7px;line-height:8px;color:#353a46;transform:translate(436.00px,353.00px) scaleX(0.9202);">$ 47.99</span>
<span class="t r c s" style="font-size:5.7px;line-height:8px;color:#353a46;transform:translate(489.00px,353.00px) scaleX(0.8781);">$ 53.89</span>
<span class="t r c s" style="font-size:5.7px;line-height:8px;color:#fff;transform:translate(218.00px,369.00px) scaleX(0.8142);">LY</span>
<span class="t r c s" style="font-size:5.7px;line-height:8px;color:#353a46;transform:translate(332.00px,369.00px) scaleX(0.8781);">$ 39.10</span>
<span class="t r c s" style="font-size:5.7px;line-height:8px;color:#353a46;transform:translate(384.00px,369.00px) scaleX(0.9044);">$ 31.16</span>
<span class="t r c s" style="font-size:5.7px;line-height:8px;color:#353a46;transform:translate(436.00px,369.00px) scaleX(0.9202);">$ 50.63</span>
<span class="t r c s" style="font-size:5.7px;line-height:8px;color:#353a46;transform:translate(489.00px,369.00px) scaleX(0.8781);">$ 53.89</span>
<div class="clip" style="left:38.00px;top:380.00px;width:470.60px;height:9.00px;">
<svg style="left:11.200000000000003px;top:5.715000000000032px;" width="4" height="5" viewBox="0 0 4 5"><path d="M1.2 0.6 L3 2.5 L1.2 4.4" fill="none" stroke="#2a2f3a" stroke-width="0.7"/></svg>
<span class="t r c s" style="font-size:5.7px;line-height:8px;color:#353a46;transform:translate(16.00px,5.00px) scaleX(0.8766);">Feb-23</span>
<span class="t r c s" style="font-size:5.7px;line-height:8px;color:#353a46;transform:translate(92.00px,5.00px) scaleX(0.9100);">Total Revenue Forecast</span>
<span class="t r c s" style="font-size:5.7px;line-height:8px;color:#353a46;transform:translate(180.00px,5.00px) scaleX(0.8371);">MFP-BU</span>
<span class="t r c s" style="font-size:5.7px;line-height:8px;color:#353a46;transform:translate(284.00px,5.00px) scaleX(0.8867);">$ 1,325,418</span>
<span class="t r c s" style="font-size:5.7px;line-height:8px;color:#353a46;transform:translate(341.00px,5.00px) scaleX(0.8903);">$ 411,866</span>
<span class="t r c s" style="font-size:5.7px;line-height:8px;color:#353a46;transform:translate(393.00px,5.00px) scaleX(0.8873);">$ 186,056</span>
<span class="t r c s" style="font-size:5.7px;line-height:8px;color:#353a46;transform:translate(445.00px,5.00px) scaleX(0.8952);">$ 727,496</span>
</div>
<span class="t c" style="font-size:6.5px;line-height:9px;color:#1a1e28;transform:translate(604.00px,75.00px) scaleX(0.8876);font-weight:700;">Scenario Manager</span>
<span class="t r c" style="font-size:6.3px;line-height:8px;color:#7a8090;transform:translate(604.00px,95.00px) scaleX(1.0509);">Switch to:</span>
<span class="t r c" style="font-size:6.3px;line-height:8px;color:#1a6fd6;transform:translate(637.00px,95.00px) scaleX(0.9749);">Base Plan</span>
<svg style="left:669.4px;top:108.3px;" width="7" height="7" viewBox="0 0 7 7"><path d="M1 1.4 V6 H6 V3.6" fill="none" stroke="#2a2f3a" stroke-width="0.7"/><path d="M4.8 0.6 V3 M3.6 1.8 H6" stroke="#2a2f3a" stroke-width="0.7"/></svg>
<svg style="left:687.3px;top:108.4px;" width="7" height="7" viewBox="0 0 7 7"><rect x="1" y="0.8" width="3" height="3.6" fill="none" stroke="#2a2f3a" stroke-width="0.7"/><rect x="3" y="2.8" width="3" height="3.4" fill="#fff" stroke="#2a2f3a" stroke-width="0.7"/></svg>
<svg style="left:704.4px;top:108.3px;" width="7" height="7" viewBox="0 0 7 7"><path d="M1.4 1.8 H5.6 V6.6 H1.4 Z" fill="#8a8f9a" stroke="#2a2f3a" stroke-width="0.6"/><path d="M0.9 1.7 H6.1 M2.5 1.7 V0.7 H4.5 V1.7" stroke="#2a2f3a" stroke-width="0.7" fill="none"/><path d="M2.8 3 V5.4 M4.2 3 V5.4" stroke="#fff" stroke-width="0.4"/></svg>
<span class="t c" style="font-size:6.7px;line-height:9px;color:#1a1e28;transform:translate(611.00px,143.00px) scaleX(0.8915);font-weight:700;">Impact cost change Jeans ...</span>
<span class="t c" style="font-size:6.7px;line-height:9px;color:#1a1e28;transform:translate(611.00px,168.00px) scaleX(0.9047);font-weight:700;">Impact of cost change for ...</span>
<svg style="left:704.5px;top:171px;" width="7" height="7" viewBox="0 0 7 7"><circle cx="3" cy="4" r="1.9" fill="#2a2f3a"/><path d="M4.4 2.6 L6 1 M4.6 1 H6 V2.4" stroke="#2a2f3a" stroke-width="0.6" fill="none"/><circle cx="3" cy="4" r="0.6" fill="#fff"/></svg>
<svg style="left:726px;top:76px;" width="7" height="7" viewBox="0 0 7 7"><path d="M0.8 1 H5.6 V4.4 H2.8 L1.6 5.6 V4.4 H0.8 Z" fill="none" stroke="#2a2f3a" stroke-width="0.6"/><circle cx="2.4" cy="2.7" r="0.4" fill="#2a2f3a"/><circle cx="4" cy="2.7" r="0.4" fill="#2a2f3a"/></svg>
<span class="t r c s" style="font-size:5.6px;line-height:7px;color:#2a2f3a;transform:translate(737.00px,77.00px) scaleX(1.0130);">SAS Copilot for Intelligent Planning</span>
<svg style="left:725.6px;top:98.6px;" width="7" height="7" viewBox="0 0 7 7"><g transform="rotate(-40 3.5 3.5)"><rect x="0.6" y="1.9" width="5.8" height="3.2" fill="#6b707c" stroke="#2a2f3a" stroke-width="0.5"/><path d="M1.8 1.9 V3.6 M3 1.9 V3.6 M4.2 1.9 V3.6 M5.4 1.9 V3.6" stroke="#fff" stroke-width="0.35"/></g></svg>
<span class="t r c s" style="font-size:5.6px;line-height:7px;color:#2a2f3a;transform:translate(737.00px,100.00px) scaleX(0.9724);">Scenario Manager</span>
<svg style="left:727px;top:387.8px;" width="6" height="5" viewBox="0 0 6 5"><path d="M1 1 L2.6 2.5 L1 4 M3 1 L4.6 2.5 L3 4" fill="none" stroke="#3b4252" stroke-width="0.6"/></svg>
</div></body></html>
